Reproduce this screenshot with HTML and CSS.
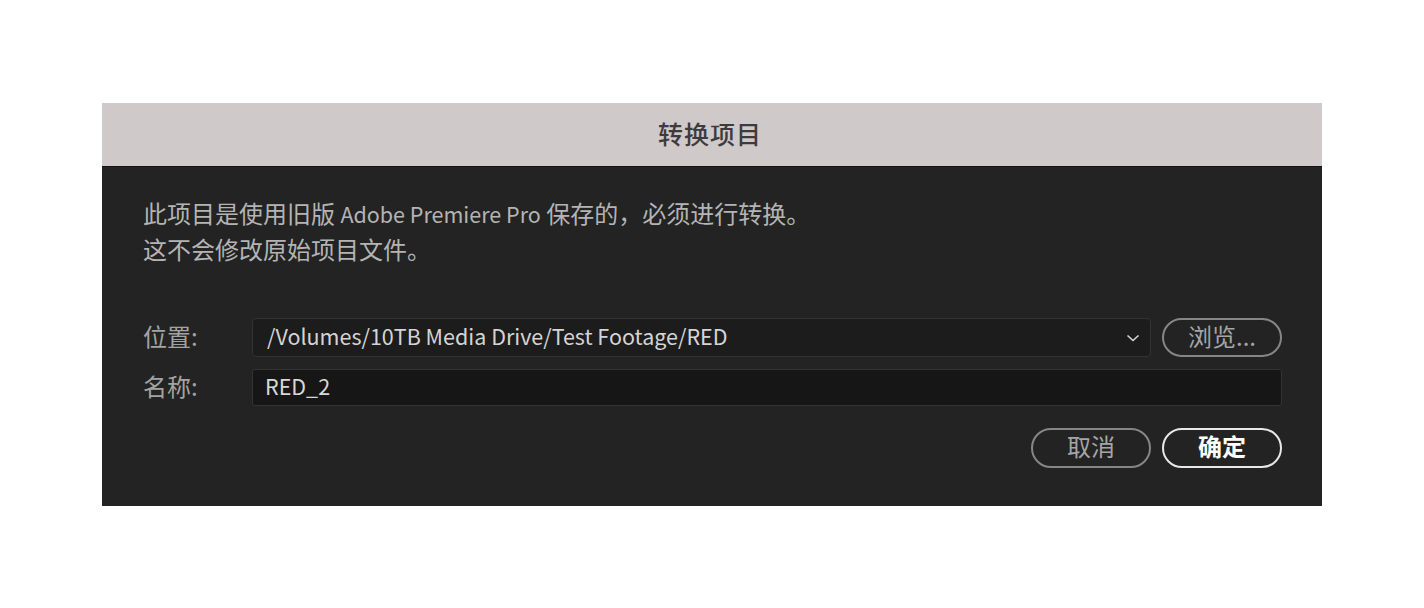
FILE: index.html
```html
<!DOCTYPE html>
<html lang="zh-CN">
<head>
<meta charset="utf-8">
<title>转换项目</title>
<link rel="stylesheet" href="styles.css">
</head>
<body>
<div class="dialog">
  <div class="titlebar"><span class="title">转换项目</span></div>
  <div class="content">
    <p class="message">此项目是使用旧版 <span class="latin">Adobe Premiere Pro</span> 保存的，必须进行转换。<br>这不会修改原始项目文件。</p>
    <div class="form">
      <div class="row">
        <span class="label">位置:</span>
        <div class="select">
          <span class="select-text">/Volumes/10TB Media Drive/Test Footage/RED</span>
          <svg class="chevron" width="14" height="8" viewBox="0 0 14 8"><path d="M1.5 1.5 L7 6.5 L12.5 1.5" fill="none" stroke="#d6d6d6" stroke-width="1.6"/></svg>
        </div>
        <button class="btn btn-secondary btn-browse">浏览...</button>
      </div>
      <div class="row row-name">
        <span class="label">名称:</span>
        <div class="input">RED_2</div>
      </div>
      <div class="actions">
        <button class="btn btn-secondary">取消</button>
        <button class="btn btn-primary">确定</button>
      </div>
    </div>
  </div>
</div>
</body>
</html>
```
FILE: styles.css
```css
html, body {
  margin: 0;
  padding: 0;
  background: #ffffff;
}
body {
  font-family: "Noto Sans CJK SC", "Noto Sans", sans-serif;
}
.dialog {
  margin: 103px 0 0 102px;
  width: 1220px;
  background: #232323;
}
.titlebar {
  height: 63px;
  background: #cfc9c9;
  border-bottom: 1px solid #141414;
  display: flex;
  align-items: center;
  justify-content: center;
}
.title {
  font-size: 25px;
  font-weight: 500;
  color: #3d3b3b;
  letter-spacing: 1px;
  margin-left: -4px;
  line-height: 1;
  padding-bottom: 2px;
}
.content {
  padding: 28px 40px 38px 41px;
}
.message {
  margin: 0;
  font-size: 24px;
  line-height: 35px;
  color: #b4b4b4;
}
.latin {
  font-size: 21.5px;
}
.form {
  margin-top: 52px;
  display: flex;
  flex-direction: column;
}
.row {
  display: flex;
  align-items: center;
  height: 39px;
}
.row-name {
  margin-top: 12px;
  height: 37px;
}
.label {
  width: 109px;
  flex: none;
  font-size: 24px;
  line-height: 1;
  padding-bottom: 3px;
  color: #a3a3a3;
}
.select {
  flex: 1;
  height: 39px;
  box-sizing: border-box;
  background: #1c1c1c;
  border: 1px solid #333333;
  border-radius: 4px;
  display: flex;
  align-items: center;
  padding: 0 10px 0 14px;
}
.select-text {
  flex: 1;
  font-size: 21.5px;
  line-height: 1;
  padding-bottom: 3px;
  color: #d4d4d4;
}
.chevron {
  flex: none;
}
.input {
  flex: 1;
  height: 37px;
  box-sizing: border-box;
  background: #161616;
  border: 1px solid #333333;
  border-radius: 3px;
  display: flex;
  align-items: center;
  padding: 0 0 3px 12px;
  font-size: 21.5px;
  line-height: 1;
  color: #d8d8d8;
}
.btn {
  width: 120px;
  height: 40px;
  box-sizing: border-box;
  border-radius: 20px;
  background: transparent;
  font-family: "Noto Sans CJK SC", "Noto Sans", sans-serif;
  font-size: 24px;
  line-height: 1;
  padding: 0 0 4px 0;
  display: flex;
  align-items: center;
  justify-content: center;
}
.btn-secondary {
  border: 2px solid #868686;
  color: #a5a5a5;
}
.btn-primary {
  border: 2px solid #e8e8e8;
  color: #ffffff;
  font-weight: 700;
}
.btn-browse {
  height: 39px;
  margin-left: 11px;
}
.actions {
  margin-top: 22px;
  display: flex;
  justify-content: flex-end;
  gap: 11px;
}
```
